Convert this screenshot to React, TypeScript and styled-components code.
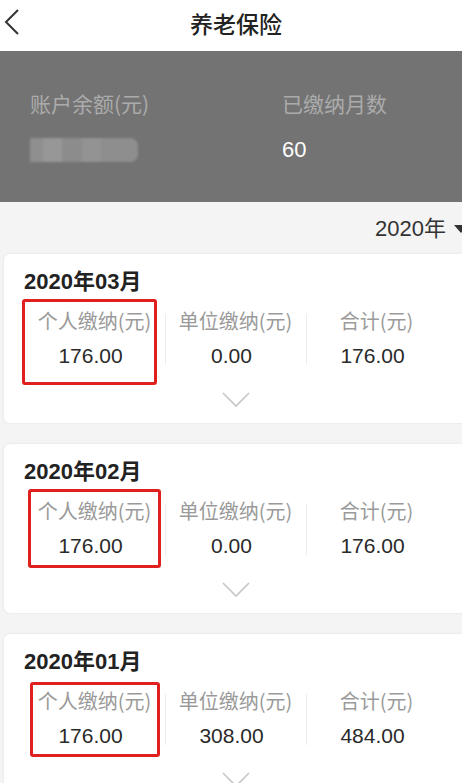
import styled, { createGlobalStyle } from "styled-components";

const GlobalStyle = createGlobalStyle`
  html, body {
    margin: 0;
    padding: 0;
    background: #f4f4f4;
    overflow: hidden;
  }
  body {
    font-family: "Liberation Sans", "Noto Sans CJK SC", sans-serif;
    color: #333;
  }
`;

const records = [
  { month: "2020年03月", personal: "176.00", company: "0.00", total: "176.00", box: { l: -2, t: -9, r: 8, b: -16 } },
  { month: "2020年02月", personal: "176.00", company: "0.00", total: "176.00", box: { l: 4, t: -9, r: 4, b: -9 } },
  { month: "2020年01月", personal: "176.00", company: "308.00", total: "484.00", box: { l: 6, t: -6, r: 5, b: -8 } },
];

const Chevron = () => (
  <svg width="28" height="16" viewBox="0 0 28 16">
    <polyline points="1,1 14,14 27,1" fill="none" stroke="#c6c6c6" strokeWidth="1.6" />
  </svg>
);

const BackIcon = () => (
  <svg width="16" height="26" viewBox="0 0 16 26">
    <polyline points="14,1 2,13 14,25" fill="none" stroke="#333" strokeWidth="2" />
  </svg>
);

const App = () => {
  return (
    <Page>
      <GlobalStyle />
      <Header>
        <Back>
          <BackIcon />
        </Back>
        <Title>养老保险</Title>
      </Header>
      <Banner>
        <BannerCol>
          <BannerLabel>账户余额(元)</BannerLabel>
          <Blurred />
        </BannerCol>
        <BannerCol>
          <BannerLabel>已缴纳月数</BannerLabel>
          <BannerValue>60</BannerValue>
        </BannerCol>
      </Banner>
      <YearRow>
        <YearPicker>
          2020年
          <Caret />
        </YearPicker>
      </YearRow>
      <List>
        {records.map((r) => (
          <Card key={r.month}>
            <CardTitle>{r.month}</CardTitle>
            <Stats>
              <Stat>
                <Highlight $l={r.box.l} $t={r.box.t} $r={r.box.r} $b={r.box.b} />
                <StatLabel>个人缴纳(元)</StatLabel>
                <StatValue>{r.personal}</StatValue>
              </Stat>
              <Stat $divider>
                <StatLabel>单位缴纳(元)</StatLabel>
                <StatValue>{r.company}</StatValue>
              </Stat>
              <Stat $divider>
                <StatLabel>合计(元)</StatLabel>
                <StatValue>{r.total}</StatValue>
              </Stat>
            </Stats>
            <Expand>
              <Chevron />
            </Expand>
          </Card>
        ))}
      </List>
    </Page>
  );
};

export default App;

const Page = styled.div`
  width: 472px;
  min-height: 783px;
  background: #f4f4f4;
`;

const Header = styled.div`
  height: 51px;
  background: #fff;
  display: flex;
  align-items: center;
  justify-content: center;
  position: relative;
`;

const Back = styled.div`
  position: absolute;
  left: 4px;
  top: 9px;
`;

const Title = styled.div`
  width: 462px;
  text-align: center;
  font-size: 23px;
  font-weight: 500;
  color: #222;
  font-family: "Noto Sans CJK SC", sans-serif;
  margin-top: -6px;
`;

const Banner = styled.div`
  height: 151px;
  background: #737373;
  display: grid;
  grid-template-columns: 252px 1fr;
  padding-left: 30px;
  box-sizing: border-box;
  padding-top: 38px;
`;

const BannerCol = styled.div`
  display: flex;
  flex-direction: column;
  gap: 20px;
`;

const BannerLabel = styled.div`
  font-size: 21px;
  line-height: 28px;
  color: #ababab;
  font-family: "Noto Sans CJK SC", sans-serif;
`;

const BannerValue = styled.div`
  font-size: 22px;
  line-height: 26px;
  color: #fff;
`;

const Blurred = styled.div`
  width: 108px;
  height: 24px;
  margin-top: 1px;
  border-radius: 0 8px 8px 0;
  background: linear-gradient(
    90deg,
    #8f8f8f 0 12%,
    #979797 12% 30%,
    #8c8c8c 30% 48%,
    #939393 48% 66%,
    #8e8e8e 66% 100%
  );
  filter: blur(1px);
`;

const YearRow = styled.div`
  display: flex;
  justify-content: flex-end;
  padding: 13px 4px 11px 0;
`;

const YearPicker = styled.div`
  display: flex;
  align-items: center;
  gap: 8px;
  font-size: 22px;
  line-height: 28px;
  color: #333;
`;

const Caret = styled.span`
  width: 0;
  height: 0;
  border-left: 7px solid transparent;
  border-right: 7px solid transparent;
  border-top: 8px solid #333;
`;

const List = styled.div`
  display: flex;
  flex-direction: column;
  gap: 21px;
  padding-left: 4px;
`;

const Card = styled.div`
  background: #fff;
  border-radius: 6px;
  height: 169px;
  box-sizing: border-box;
  padding: 15px 0 0 20px;
  box-shadow: 0 0 3px rgba(0, 0, 0, 0.08);
  display: flex;
  flex-direction: column;
`;

const CardTitle = styled.div`
  font-size: 22px;
  font-weight: 700;
  line-height: 26px;
  color: #222;
`;

const Stats = styled.div`
  display: grid;
  grid-template-columns: repeat(3, 141px);
  margin-top: 13px;
`;

const Stat = styled.div<{ $divider?: boolean }>`
  position: relative;
  display: flex;
  flex-direction: column;
  align-items: center;
  gap: 9px;
  &::before {
    content: "";
    display: ${(p) => (p.$divider ? "block" : "none")};
    position: absolute;
    left: 0;
    top: 6px;
    bottom: 4px;
    width: 1px;
    background: #ededed;
  }
`;

const Highlight = styled.div<{ $l: number; $t: number; $r: number; $b: number }>`
  position: absolute;
  left: ${(p) => p.$l}px;
  top: ${(p) => p.$t}px;
  right: ${(p) => p.$r}px;
  bottom: ${(p) => p.$b}px;
  border: 3px solid #e0201e;
  border-radius: 3px;
`;

const StatLabel = styled.div`
  font-size: 20px;
  line-height: 26px;
  color: #9a9a9a;
  font-family: "Noto Sans CJK SC", sans-serif;
`;

const StatValue = styled.div`
  font-size: 21px;
  line-height: 26px;
  color: #2a2a2a;
  margin-right: 8px;
`;

const Expand = styled.div`
  width: 423px;
  display: flex;
  justify-content: center;
  margin-top: 23px;
`;
